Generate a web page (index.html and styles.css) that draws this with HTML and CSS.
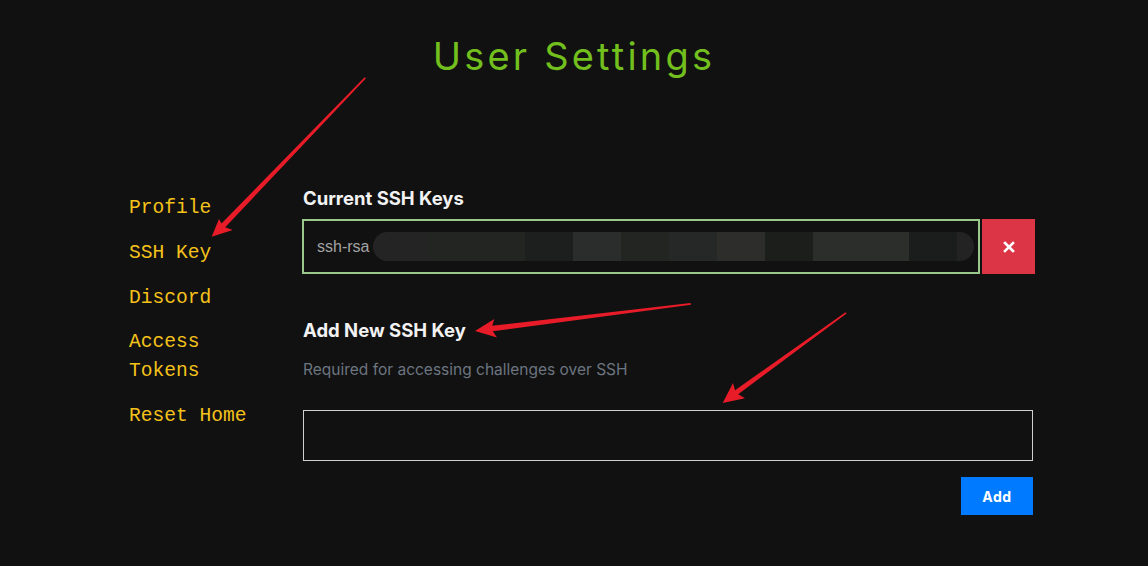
FILE: index.html
```html
<!DOCTYPE html>
<html lang="en">
<head>
<meta charset="utf-8">
<title>User Settings</title>
<link rel="stylesheet" href="styles.css">
</head>
<body>
<h1 class="title">User Settings</h1>
<div class="row">
  <nav class="side">
    <a class="side-link" href="#">Profile</a>
    <a class="side-link" href="#">SSH Key</a>
    <a class="side-link" href="#">Discord</a>
    <a class="side-link" href="#">Access Tokens</a>
    <a class="side-link" href="#">Reset Home</a>
  </nav>
  <main class="content">
    <h5 class="heading">Current SSH Keys</h5>
    <div class="key-row">
      <div class="key-field">
        <span class="key-prefix">ssh-rsa</span>
        <span class="redact"></span>
      </div>
      <button class="btn-delete" type="button" aria-label="Delete">
        <svg width="12" height="12" viewBox="0 0 12 12"><path d="M2 2 L10 10 M10 2 L2 10" stroke="#fff" stroke-width="2.6" stroke-linecap="square"/></svg>
      </button>
    </div>
    <h5 class="heading heading-add">Add New SSH Key</h5>
    <p class="muted">Required for accessing challenges over SSH</p>
    <div class="key-input"></div>
    <div class="actions"><button class="btn-add" type="button">Add</button></div>
  </main>
</div>
<svg class="annotations" width="1148" height="566" viewBox="0 0 1148 566">
  <polygon fill="#e81c28" points="366,78.3 364.6,77.2 221.5,223.6 219,219 211.7,236.7 232.7,230 225.2,227.3"/>
  <polygon fill="#e81c28" points="691,304.8 690.6,303.1 492.2,325.8 494.3,319 475,331 497,337.5 492.8,331.3"/>
  <polygon fill="#e81c28" points="846.6,313.5 845.5,312.3 735,390.3 733,383 722.7,403 745,398.3 738.2,394.3"/>
</svg>
</body>
</html>
```
FILE: styles.css
```css
html, body {
  margin: 0;
  padding: 0;
  background: #111111;
  height: 100%;
  overflow: hidden;
}
body {
  position: relative;
  font-family: "Inter", "Liberation Sans", sans-serif;
  color: #f0f0f0;
}
.title {
  margin: 33px 0 0;
  text-align: center;
  font-family: "Inter", sans-serif;
  font-weight: 400;
  font-size: 38px;
  line-height: 46px;
  letter-spacing: 3.2px;
  color: #72bf1e;
}
.row {
  display: flex;
  padding-left: 98px;
  margin-top: 107px;
}
.side {
  width: 160px;
  padding: 0 15px;
  display: flex;
  flex-direction: column;
}
.side-link {
  display: block;
  padding: 8px 16px;
  font-family: "Liberation Mono", "DejaVu Sans Mono", monospace;
  font-size: 19.6px;
  line-height: 28.8px;
  color: #f4c21b;
  text-decoration: none;
}
.content {
  width: 730px;
  padding: 0 15px;
}
.heading {
  margin: 0 0 10px;
  font-size: 18.5px;
  line-height: 24px;
  font-weight: 700;
  color: #f2f2f2;
}
.heading-add {
  margin-top: 44px;
  margin-bottom: 16px;
}
.key-row {
  display: flex;
  gap: 2px;
  height: 55px;
  width: 733px;
  margin-left: -1px;
  margin-top: -1px;
}
.key-field {
  flex: 1;
  border: 2px solid #9bc98c;
  display: flex;
  align-items: center;
  padding: 0 4px 0 13px;
  gap: 4px;
}
.key-prefix {
  font-family: "Liberation Sans", Arial, sans-serif;
  font-size: 16px;
  color: #a3a3a3;
}
.redact {
  flex: 1;
  height: 29px;
  border-radius: 15px;
  background: linear-gradient(90deg,
    #242424 0, #242424 56px,
    #232523 56px, #232523 152px,
    #1c1f1d 152px, #1c1f1d 200px,
    #2a2d2b 200px, #2a2d2b 248px,
    #232523 248px, #232523 296px,
    #252826 296px, #252826 344px,
    #2d2e2c 344px, #2d2e2c 392px,
    #1b1e1b 392px, #1b1e1b 440px,
    #2b2e2b 440px, #2b2e2b 536px,
    #1a1d1b 536px, #1a1d1b 584px,
    #222322 584px);
}
.btn-delete {
  width: 53px;
  border: 0;
  background: #dc3545;
  display: flex;
  align-items: center;
  justify-content: center;
  padding: 0;
}
.muted {
  margin: 0 0 28px;
  font-size: 15.5px;
  line-height: 24px;
  color: #6c7580;
}
.key-input {
  height: 49px;
  border: 1px solid #d0d0d0;
}
.actions {
  display: flex;
  justify-content: flex-end;
  margin-top: 16px;
}
.btn-add {
  width: 72px;
  height: 38px;
  border: 0;
  background: #007bff;
  color: #fff;
  font-family: "Inter", sans-serif;
  font-weight: 700;
  font-size: 14px;
  letter-spacing: 0.5px;
}
.annotations {
  position: absolute;
  left: 0;
  top: 0;
  pointer-events: none;
}
```
